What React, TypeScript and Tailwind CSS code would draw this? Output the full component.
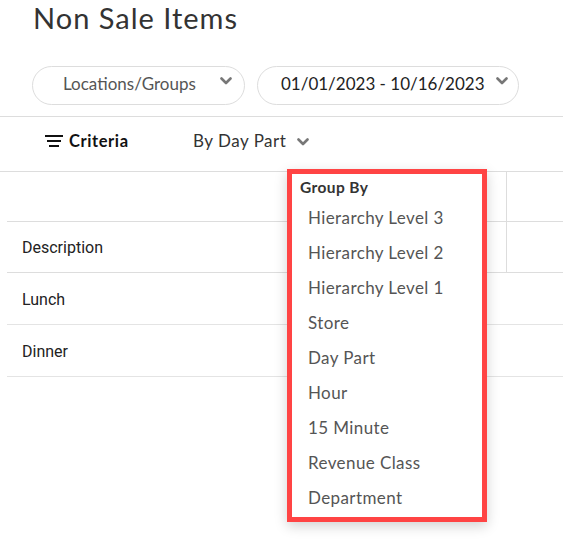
import React from 'react';

const Chevron = ({ className = '' }: { className?: string }) => (
  <svg width="12" height="8" viewBox="0 0 12 8" className={className}>
    <path d="M1.5 1.5 L6 6 L10.5 1.5" fill="none" stroke="#777" strokeWidth="2.6" strokeLinecap="round" strokeLinejoin="round" />
  </svg>
);

const groupByOptions = [
  'Hierarchy Level 3',
  'Hierarchy Level 2',
  'Hierarchy Level 1',
  'Store',
  'Day Part',
  'Hour',
  '15 Minute',
  'Revenue Class',
  'Department',
];

const rows = ['Lunch', 'Dinner'];

export default function App() {
  return (
    <div className="relative w-[563px] h-[542px] overflow-hidden bg-white font-['Lato','Noto_Sans',sans-serif]">
      <h1 className="pl-[33px] pt-[1px] text-[29px] leading-[34px] tracking-[1px] text-[#333] font-normal">Non Sale Items</h1>

      <div className="flex gap-[12px] pl-[32px] mt-[31px] h-[39px]">
        <button className="flex items-center w-[213px] h-full rounded-full border border-[#ddd] pl-[30px] pr-[12px] pb-[3px] text-[17px] text-[#555]">
          <span className="flex-1 text-left">Locations/Groups</span>
          <Chevron className="-mt-[6px]" />
        </button>
        <button className="flex items-center w-[262px] h-full rounded-full border border-[#ddd] pl-[23px] pr-[10px] pb-[3px] text-[17px] text-[#222]">
          <span className="flex-1 text-left">01/01/2023 - 10/16/2023</span>
          <Chevron className="-mt-[6px]" />
        </button>
      </div>

      <div className="mt-[11px] border-t border-b border-[#ddd] h-[56px] flex items-center pb-[6px]">
        <div className="flex items-center pl-[45px] w-[193px]">
          <svg width="18" height="13" viewBox="0 0 18 13" className="mr-[6px]">
            <rect x="0" y="0" width="18" height="2" fill="#111" />
            <rect x="2" y="5" width="14" height="2" fill="#111" />
            <rect x="4" y="10" width="10" height="2" fill="#111" />
          </svg>
          <span className="text-[16.5px] tracking-[0.6px] font-bold text-[#111]">Criteria</span>
        </div>
        <span className="text-[17px] tracking-[0.5px] text-[#333]">By Day Part</span>
        <Chevron className="ml-[11px] mt-[1px]" />
      </div>

      <div className="ml-[7px] font-['Roboto',sans-serif] text-[16px] text-[#222]">
        <div className="grid grid-cols-[500px_1fr] h-[50px] border-b border-[#ddd]">
          <div className="border-r border-[#ddd]" />
          <div />
        </div>
        <div className="grid grid-cols-[500px_1fr] h-[51px] border-b border-[#ddd]">
          <div className="border-r border-[#ddd] flex items-center pl-[15px] pt-[1px]">Description</div>
          <div />
        </div>
        {rows.map((r) => (
          <div key={r} className="h-[52px] border-b border-[#e4e4e4] flex items-center pl-[15px] pt-[2px]">
            {r}
          </div>
        ))}
      </div>

      <div className="absolute left-[287px] top-[169px] w-[200px] h-[353px] border-[5px] border-[#f44] bg-white shadow-[0_4px_12px_rgba(0,0,0,0.18)]">
        <div className="pl-[8px] pt-[3px] text-[15.5px] leading-[20px] tracking-[0.4px] font-bold text-[#333]">Group By</div>
        <ul className="pl-[16px] pt-[3px]">
          {groupByOptions.map((o) => (
            <li key={o} className="h-[35px] flex items-center text-[17px] tracking-[0.4px] text-[#555]">
              {o}
            </li>
          ))}
        </ul>
      </div>
    </div>
  );
}
